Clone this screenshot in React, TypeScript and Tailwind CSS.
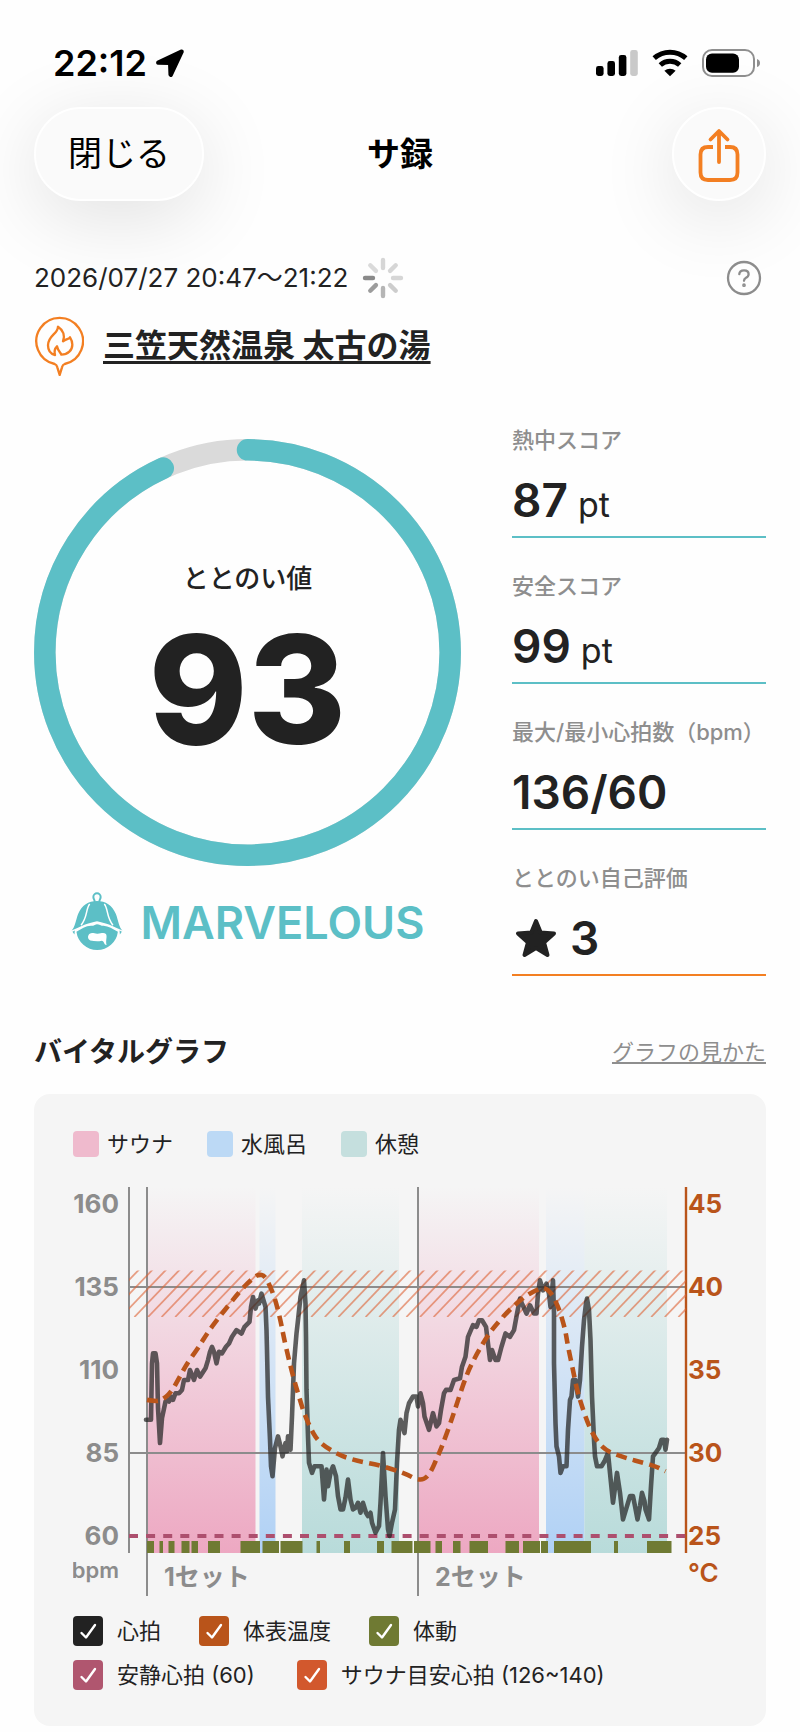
import { useState } from 'react';

type Point = [number, number];

// Chart geometry, in viewBox units
const CHART_W = 654;
const CHART_H = 413;
const AXIS_LEFT = 56;
const AXIS_RIGHT = 613;
const AXIS_BOTTOM = 366;
const START_X = 74;
const SECOND_SET_X = 345;

const bpmY = (bpm: number) => 349 - (bpm - 60) * 3.32;
const tempY = (temp: number) => 349 - (temp - 25) * 16.6;

const heartRate: Point[] = [
  [-1, 95], [4, 95], [5, 112], [6, 115], [8.5, 115], [10, 112], [11, 98.5], [13, 88], [15, 95.5], [18.5, 100.5],
  [20, 101], [22, 100.5], [24, 102], [26, 101], [28.5, 103], [32, 103], [35, 104], [37, 107], [41, 107], [43, 110],
  [47, 107], [50, 110], [53, 108], [58.5, 110.5], [61, 113], [63, 115.5], [65, 117], [67, 115.5], [69.5, 112], [72, 115.5],
  [75, 115], [79, 117], [82, 118], [85, 120], [89.5, 122], [94.5, 121], [97.5, 123], [102.5, 124.5], [104, 129], [106, 132],
  [108.5, 128.5], [111, 131], [112, 130], [114.5, 133], [118.5, 129], [119.5, 122], [120, 116], [121, 102], [123, 89], [124, 81],
  [125.5, 78], [128, 86.5], [131, 90], [133.5, 87], [135.5, 84], [138.5, 88], [140, 85.5], [141, 90], [143.5, 86], [145, 96],
  [147, 112], [149.5, 121], [151, 125], [153.5, 132], [157, 137], [158.5, 130], [159, 120], [159.5, 104], [161, 90], [162, 82],
  [165, 79], [167.5, 81], [174.5, 81], [177, 71], [179.5, 80], [181, 75], [183.5, 79], [186, 81], [189, 78], [191, 72],
  [193.5, 68], [196, 68], [198.5, 71.5], [201, 77], [203.5, 71], [206, 68], [208.5, 68.5], [211, 70], [213.5, 67], [216, 70],
  [219, 67], [221, 66], [223.5, 67], [225, 64], [228.5, 61], [232, 63], [233.5, 70], [236, 85], [238.5, 72], [241, 62],
  [242.5, 60], [245, 64], [248, 68], [250, 82], [252, 92], [253.5, 95], [257.5, 91], [259.5, 97], [262, 100], [266, 102],
  [269.5, 102], [271, 99], [273.5, 103], [276, 100], [277.5, 96], [282, 92], [286, 97], [289.5, 93], [292, 94], [294, 98],
  [297, 103], [299, 104], [303.5, 104], [307, 107], [313, 107.5], [315, 111], [318.5, 114], [321, 120], [326, 123.5], [329.5, 123],
  [332, 125], [335, 125], [339, 123], [341, 118], [343, 113], [345, 116], [348.5, 113], [351, 113], [354.5, 117], [358.5, 121],
  [363, 120], [367, 122], [370, 127], [373, 131.5], [375, 130], [379.5, 127], [383, 129.5], [387, 127], [389.5, 127], [391, 133],
  [393, 137], [396, 134], [399.5, 136], [402, 133], [403.5, 129], [406, 137], [407, 127], [407, 112], [408.5, 94], [409.5, 87],
  [412, 84], [413.5, 79], [416, 81], [419.5, 81], [421, 92], [423, 101], [424.5, 102], [426, 107], [428.5, 107], [431, 102],
  [433, 107], [435, 117], [437, 125], [439, 130], [440, 131.5], [442, 128], [443.5, 119], [445, 102], [447, 89], [448, 84],
  [450, 81], [454.5, 81], [457.5, 82.5], [461, 85], [463, 79], [466, 70], [470, 79], [473, 73], [476, 65], [480, 69],
  [483, 72], [486, 72], [488, 69], [490.5, 65], [493, 69], [495, 73], [497.5, 70.5], [498.5, 68], [502, 65], [504, 75],
  [506, 84], [508.5, 85], [512, 86.5], [514.5, 89], [517, 89], [518.5, 86], [520, 89],
];

const skinTemp: Point[] = [
  [0, 33.2], [8.5, 33.1], [15, 33.2], [23.5, 33.6], [32, 34.5], [40, 35.4], [52, 36.4], [61, 37.3], [75, 38.4], [93.5, 39.8],
  [107, 40.6], [112, 40.75], [117.5, 40.7], [123.5, 40], [128.5, 39.2], [133.5, 38], [137, 36.9], [142, 35.6], [147, 34.4], [152, 33.4],
  [157, 32.4], [163.5, 31.5], [170, 30.8], [180, 30.3], [195, 29.8], [212, 29.5], [230, 29.3], [247, 29], [260, 28.7], [270, 28.4],
  [277, 28.4], [283.5, 28.8], [290, 29.7], [295, 30.4], [303.5, 31.8], [310, 33], [320, 34.8], [330, 36], [341, 37.1], [348.5, 37.7],
  [362, 38.6], [377, 39.4], [388.5, 39.8], [397, 40], [405, 39.6], [412, 38.7], [418, 37.5], [421, 36.4], [426, 35], [430, 33.8],
  [435, 32.8], [442, 31.6], [450, 30.7], [460, 30.1], [478.5, 29.7], [497, 29.4], [508.5, 29.2], [518.5, 28.9],
];

const phases = [
  { from: 1, to: 108.5, fill: 'url(#sauna)' },
  { from: 112.5, to: 128.5, fill: 'url(#water)' },
  { from: 155, to: 252, fill: 'url(#rest)' },
  { from: 272, to: 392, fill: 'url(#sauna)' },
  { from: 399, to: 437.5, fill: 'url(#water)' },
  { from: 437.5, to: 520, fill: 'url(#rest)' },
];

const movement: Point[] = [
  [0, 7], [12.5, 16], [21.5, 27.5], [34.5, 42.5], [44.5, 51], [61, 73], [93.5, 113], [115.5, 132], [133.5, 155.5],
  [169.5, 173], [197, 203], [230, 237], [244.5, 265.5], [267, 283.5], [288.5, 295], [306, 313.5], [322.5, 341],
  [358.5, 372], [376, 393], [394, 401], [407, 444], [467, 471], [500, 524.5],
];

const yTicks = [
  { bpm: 160, temp: 45 },
  { bpm: 135, temp: 40 },
  { bpm: 110, temp: 35 },
  { bpm: 85, temp: 30 },
  { bpm: 60, temp: 25 },
];

// Quadratic smoothing through the midpoints
const smoothPath = (points: Point[]) => {
  const pts = points.map(([x, t]) => [START_X + x, tempY(t)]);
  let d = `M${pts[0][0]} ${pts[0][1]}`;
  for (let i = 1; i < pts.length - 1; i++) {
    const mx = (pts[i][0] + pts[i + 1][0]) / 2;
    const my = (pts[i][1] + pts[i + 1][1]) / 2;
    d += ` Q${pts[i][0]} ${pts[i][1]} ${mx} ${my}`;
  }
  const last = pts[pts.length - 1];
  return `${d} L${last[0]} ${last[1]}`;
};

const StatusBar = () => (
  <div className="flex items-center justify-between pt-[43px] pr-[5px] pl-[19px] text-black">
    <div className="flex items-center gap-2">
      <span className="text-[36px] leading-10 font-semibold">22:12</span>
      <svg width="29" height="29" viewBox="0 0 28 28" aria-hidden="true">
        <path d="M25.5 1.5 L2.5 12.2 Q1.4 13.6 3 14.2 L13.6 14.4 L14 25 Q14.8 26.8 16.2 25.5 L26.8 2.8 Q26.8 1.2 25.5 1.5 Z" fill="currentColor" stroke="currentColor" strokeWidth="2" strokeLinejoin="round" />
      </svg>
    </div>
    <div className="flex items-center gap-3.5">
      <svg width="42" height="28" viewBox="0 0 42 28" aria-hidden="true">
        <rect x="0" y="17" width="7.6" height="10" rx="2.4" />
        <rect x="11.4" y="12" width="7.6" height="15" rx="2.4" />
        <rect x="22.8" y="6" width="7.6" height="21" rx="2.4" />
        <rect x="34.2" y="1" width="7.6" height="26" rx="2.4" fill="#c9c9c9" />
      </svg>
      <svg width="36" height="28" viewBox="0 0 36 28" aria-hidden="true">
        <path d="M2.2 9.2 A23.6 23.6 0 0 1 33.8 9.2" fill="none" stroke="currentColor" strokeWidth="5" />
        <path d="M8.3 16 A14.6 14.6 0 0 1 27.7 16" fill="none" stroke="currentColor" strokeWidth="5" />
        <path d="M18 27.2 L12.4 21.8 A8.4 8.4 0 0 1 23.6 21.8 Z" />
      </svg>
      <svg width="59" height="28" viewBox="0 0 59 28" aria-hidden="true">
        <rect x="1" y="1" width="51" height="26" rx="9" fill="none" stroke="#8f8f8f" strokeWidth="2" />
        <rect x="4" y="4.4" width="33" height="19.4" rx="6" />
        <path d="M55 10 Q58 11 58 14 Q58 17 55 18 Z" fill="#8f8f8f" />
      </svg>
    </div>
  </div>
);

const NavBar = () => (
  <header className="mt-6 flex items-center justify-between text-black">
    <div className="flex-1">
      <button type="button" className="h-[94px] rounded-full border-2 border-white bg-[#fafafa] px-8 text-[34px] leading-10 shadow-[0_16px_80px_rgba(0,0,0,0.12)]">
        閉じる
      </button>
    </div>
    <h1 className="text-[33px] leading-10 font-bold">サ録</h1>
    <div className="flex flex-1 justify-end">
      <button type="button" aria-label="共有" className="grid size-[94px] place-items-center rounded-full border-2 border-white bg-[#fafafa] shadow-[0_16px_80px_rgba(0,0,0,0.12)]">
        <svg width="42" height="56" viewBox="0 -4 42 56" fill="none" stroke="#f37f22" strokeWidth="3.8" strokeLinecap="round" strokeLinejoin="round" aria-hidden="true">
          <path d="M15 17 H10 Q2.5 17 2.5 24.5 V42.5 Q2.5 50 10 50 H32 Q39.5 50 39.5 42.5 V24.5 Q39.5 17 32 17 H27" strokeLinecap="butt" />
          <path d="M21 32 V2 M12.5 9.500 L21 1 L29.500 9.500" />
        </svg>
      </button>
    </div>
  </header>
);

const spokes = ['#d6d6d6', '#d6d6d6', '#d6d6d6', '#cdcdcd', '#b5b5b5', '#9c9c9c', '#8a8a8a', '#dadada'];

const Spinner = () => (
  <svg width="42" height="42" viewBox="-21 -21 42 42" role="status" aria-label="読み込み中">
    {spokes.map((color, i) => (
      <line key={i} x1="0" y1="-10" x2="0" y2="-18" stroke={color} strokeWidth="4.4" strokeLinecap="round" transform={`rotate(${i * 45})`} />
    ))}
  </svg>
);

const PinIcon = () => (
  <svg width="50" height="60" viewBox="-2 -2 150 180" fill="none" stroke="#f37f22" strokeWidth="7" strokeLinejoin="round" className="shrink-0" aria-hidden="true">
    <path d="M60 142 A70 70 0 1 1 90 142 Q84 144 82 152 L75 175 L68 152 Q66 144 60 142 Z" />
    <path d="M70 30 C70 52 40 56 40 86 C40 102 48 112 61 115 C58 104 60 96 67 89 C70 104 78 107 80 114 C100 114 113 100 113 84 C113 74 110 68 106 62 C102 68 94 66 85 74 C92 58 86 40 70 30 Z" />
  </svg>
);

const HatIcon = () => (
  <svg width="52" height="61" viewBox="0 0 156 184" fill="#5cbfc6" className="shrink-0" aria-hidden="true">
    <path d="M71 32 C73 26 67 22 67 15 A11 11 0 0 1 89 15 C89 22 83 26 85 32" fill="none" stroke="#5cbfc6" strokeWidth="6" />
    <path d="M1 116 C12 106 14 84 21 66 C32 40 52 27 78 27 C104 27 124 40 135 66 C142 84 144 106 155 116 C140 110 128 104 114 98 C100 92 92 92 78 88 C64 92 56 92 42 98 C28 104 16 110 1 116 Z" />
    <path d="M56 36 C44 50 50 76 30 100 M100 36 C112 50 106 76 126 100" fill="none" stroke="#fff" strokeWidth="4.5" />
    <path d="M16 120 C30 112 44 102 60 102 C70 102 74 97 78 97 C84 97 90 102 98 102 C112 103 126 112 141 120 A63 63 0 0 1 16 120 Z" />
    <path d="M4 120 L11 116 L10 128 Z M153 120 L146 116 L147 128 Z" />
    <path d="M56 126 C64 121 72 127 80 126 C90 126 98 121 105 127 C110 134 103 148 107 160 C97 158 101 148 92 147 C80 150 68 148 58 146 C48 142 50 130 56 126 Z" fill="#fff" />
  </svg>
);

const ScoreRing = ({ score }: { score: number }) => {
  const length = 2 * Math.PI * 203;
  return (
    <div className="relative">
      <svg viewBox="0 0 427 427" className="w-full -rotate-90" fill="none" strokeWidth="21.5" aria-hidden="true">
        <circle cx="213.5" cy="213.5" r="202.7" stroke="#dadada" />
        <circle cx="213.5" cy="213.5" r="202.7" stroke="#5cbfc6" strokeLinecap="round" strokeDasharray={`${(length * score) / 100} ${length}`} />
      </svg>
      <div className="absolute inset-0 flex flex-col items-center pt-[120px]">
        <span className="text-[26px] leading-10 font-medium">ととのい値</span>
        <span className="mt-4 text-[150px] leading-[150px] font-extrabold">{score}</span>
      </div>
    </div>
  );
};

interface ScoreItemProps {
  label: string;
  lineClass?: string;
  children: React.ReactNode;
}

const ScoreItem = ({ label, lineClass = 'border-[#5cbfc6]', children }: ScoreItemProps) => (
  <div className={`border-b-2 pb-1 ${lineClass}`}>
    <dt className="text-[22px] leading-9 font-medium whitespace-nowrap text-[#8e8e8e]">{label}</dt>
    <dd className="mt-2.5 flex h-16 items-baseline gap-2.5 text-[46px] leading-[64px] font-semibold">{children}</dd>
  </div>
);

const LegendItem = ({ color, label }: { color: string; label: string }) => (
  <li className="flex items-center gap-2">
    <span className={`size-[26px] rounded-[4px] ${color}`}></span>
    <span>{label}</span>
  </li>
);

const VitalChart = ({ visible }: { visible: Record<string, boolean> }) => (
  <svg viewBox={`0 0 ${CHART_W} ${CHART_H}`} className="mt-[30px] w-full" role="img" aria-label="バイタルグラフ">
    <defs>
      <linearGradient id="sauna" x1="0" y1="0" x2="0" y2="1">
        <stop offset="0" stopColor="#eda8c2" stopOpacity="0" />
        <stop offset="1" stopColor="#eda8c2" />
      </linearGradient>
      <linearGradient id="water" x1="0" y1="0" x2="0" y2="1">
        <stop offset="0" stopColor="#b0d1f5" stopOpacity="0" />
        <stop offset="1" stopColor="#b0d1f5" />
      </linearGradient>
      <linearGradient id="rest" x1="0" y1="0" x2="0" y2="1">
        <stop offset="0" stopColor="#b8dbda" stopOpacity="0" />
        <stop offset="1" stopColor="#b8dbda" />
      </linearGradient>
      <clipPath id="target">
        <rect x={AXIS_LEFT} y={bpmY(140)} width={AXIS_RIGHT - AXIS_LEFT} height={bpmY(126) - bpmY(140)} />
      </clipPath>
    </defs>

    {phases.map((p) => (
      <rect key={p.from} x={START_X + p.from} y="0" width={p.to - p.from} height={AXIS_BOTTOM} fill={p.fill} />
    ))}

    {/* Axes and grid */}
    <g stroke="#8c8c8c" strokeWidth="2">
      <line x1={AXIS_LEFT} y1={bpmY(135)} x2={AXIS_RIGHT} y2={bpmY(135)} />
      <line x1={AXIS_LEFT} y1={bpmY(85)} x2={AXIS_RIGHT} y2={bpmY(85)} />
      <line x1={AXIS_LEFT} y1="0" x2={AXIS_LEFT} y2={AXIS_BOTTOM} />
      <line x1={START_X} y1="0" x2={START_X} y2="409" />
      <line x1={SECOND_SET_X} y1="0" x2={SECOND_SET_X} y2="409" />
    </g>
    <line x1={AXIS_RIGHT} y1="0" x2={AXIS_RIGHT} y2={AXIS_BOTTOM} stroke="#b9541a" strokeWidth="2.4" />

    {visible.target && (
      <g clipPath="url(#target)" stroke="#dd6236" strokeOpacity="0.6" strokeWidth="1.8">
        {Array.from({ length: 47 }, (_, i) => (
          <line key={i} x1={7 + i * 13.6} y1="130" x2={53 + i * 13.6} y2="82" />
        ))}
      </g>
    )}

    {visible.resting && (
      <line x1={AXIS_LEFT} y1={bpmY(60)} x2={AXIS_RIGHT} y2={bpmY(60)} stroke="#ad4f6e" strokeWidth="4" strokeDasharray="9 8.1" />
    )}

    {visible.movement &&
      movement.map(([from, to]) => (
        <rect key={from} x={START_X + from} y="354" width={to - from} height="12" fill="#6f7a33" />
      ))}

    {visible.heart && (
      <polyline
        points={heartRate.map(([x, bpm]) => `${START_X + x},${bpmY(bpm)}`).join(' ')}
        fill="none"
        stroke="#222"
        strokeOpacity="0.72"
        strokeWidth="4.6"
        strokeLinecap="round"
        strokeLinejoin="round"
      />
    )}

    {visible.temp && (
      <path d={smoothPath(skinTemp)} fill="none" stroke="#b9541a" strokeWidth="4.6" strokeDasharray="10.8 6.3" />
    )}

    {yTicks.map((tick) => (
      <g key={tick.bpm} className="text-[26px] font-bold">
        <text x="46" y={bpmY(tick.bpm) + 9} textAnchor="end" fill="#8c8c8c">{tick.bpm}</text>
        <text x="615" y={bpmY(tick.bpm) + 9} fill="#b9541a">{tick.temp}</text>
      </g>
    ))}
    <text x="46" y="391" textAnchor="end" fill="#8c8c8c" className="text-[22px] font-semibold">bpm</text>
    <text x="615" y="395" fill="#b9541a" className="text-[26px] font-semibold">°C</text>
    <text x="91" y="399" fill="#8c8c8c" className="text-[25px] font-bold">1セット</text>
    <text x="362" y="399" fill="#8c8c8c" className="text-[25px] font-bold">2セット</text>
  </svg>
);

interface SeriesToggleProps {
  label: string;
  color: string;
  checked: boolean;
  onChange: () => void;
}

const SeriesToggle = ({ label, color, checked, onChange }: SeriesToggleProps) => (
  <label className="flex items-center gap-3.5">
    <span className="relative flex">
      <input type="checkbox" checked={checked} onChange={onChange} className={`size-[30px] appearance-none rounded-[4px] ${color}`} />
      {checked && (
        <svg viewBox="0 0 30 30" className="pointer-events-none absolute inset-0" fill="none" stroke="#fff" strokeWidth="2.4" strokeLinecap="round" strokeLinejoin="round" aria-hidden="true">
          <path d="M8.5 17 L13 21.5 L22 9" />
        </svg>
      )}
    </span>
    <span>{label}</span>
  </label>
);

export default function App() {
  const [visible, setVisible] = useState<Record<string, boolean>>({
    heart: true,
    temp: true,
    movement: true,
    resting: true,
    target: true,
  });

  const toggle = (key: string) => setVisible((v) => ({ ...v, [key]: !v[key] }));

  return (
    <div lang="ja" className="min-h-screen overflow-hidden bg-[#fefefe] px-[34px] pb-1.5 font-['Inter','Noto_Sans_CJK_JP',sans-serif] text-[#222]">
      <StatusBar />
      <NavBar />

      <main>
        <div className="mt-14 flex items-center justify-between">
          <div className="flex items-center gap-3.5">
            <time className="text-[26px] leading-10">2026/07/27 20:47～21:22</time>
            <Spinner />
          </div>
          <button type="button" aria-label="ヘルプ" className="mr-1">
            <svg width="36" height="36" viewBox="0 0 36 36" fill="none" stroke="#8c8c8c" strokeWidth="2.3" strokeLinecap="round" aria-hidden="true">
              <circle cx="18" cy="18" r="16" />
              <path d="M13.3 14.2 Q13.6 10.4 18 10.4 Q22.6 10.4 22.6 14.2 Q22.6 16.4 20 17.8 Q18 18.9 18 20.8" />
              <circle cx="18" cy="25.2" r="0.7" fill="#8c8c8c" />
            </svg>
          </button>
        </div>

        <div className="mt-[17px] flex items-center gap-[19px]">
          <PinIcon />
          <a href="#venue" className="text-[32px] leading-10 font-bold underline decoration-3 underline-offset-4">三笠天然温泉 太古の湯</a>
        </div>

        <section className="mt-[42px] grid grid-cols-[427fr_254fr] gap-[51px]">
          <div className="pt-[21px]">
            <ScoreRing score={93} />
            <div className="mt-[26px] flex items-center justify-center gap-[18px]">
              <HatIcon />
              <span className="text-[45px] leading-[60px] font-semibold text-[#5cbfc6]">MARVELOUS</span>
            </div>
          </div>
          <dl className="flex flex-col gap-[30px] pt-1">
            <ScoreItem label="熱中スコア">
              87<span className="text-[34px] font-normal">pt</span>
            </ScoreItem>
            <ScoreItem label="安全スコア">
              99<span className="text-[34px] font-normal">pt</span>
            </ScoreItem>
            <ScoreItem label="最大/最小心拍数（bpm）">136/60</ScoreItem>
            <ScoreItem label="ととのい自己評価" lineClass="border-[#f37f22]">
              <svg width="48" height="40" viewBox="-24 -20 48 40" className="self-center" aria-hidden="true">
                <path d="M0 -17 L4.7 -5.4 L18 -4.6 L8 4.4 L11.5 17 L0 10 L-11.5 17 L-8 4.4 L-18 -4.6 L-4.7 -5.4 Z" fill="#222" stroke="#222" strokeWidth="4" strokeLinejoin="round" />
              </svg>
              3
            </ScoreItem>
          </dl>
        </section>

        <section className="mt-14">
          <div className="flex items-center justify-between">
            <h2 className="text-[28px] leading-10 font-bold">バイタルグラフ</h2>
            <a href="#guide" className="text-[22px] leading-10 text-[#8e8e8e] underline decoration-2 underline-offset-2">グラフの見かた</a>
          </div>

          <div className="mt-[22px] rounded-2xl bg-[#f5f5f5] px-[39px] pt-[37px] pb-9 text-[22px] leading-[26px]">
            <ul className="flex gap-[34px]">
              <LegendItem color="bg-[#efbacd]" label="サウナ" />
              <LegendItem color="bg-[#bcd9f5]" label="水風呂" />
              <LegendItem color="bg-[#c5dfde]" label="休憩" />
            </ul>

            <VitalChart visible={visible} />

            <div className="mt-4 flex flex-col gap-3.5 leading-[30px]">
              <div className="flex gap-[38px]">
                <SeriesToggle label="心拍" color="bg-[#222222]" checked={visible.heart} onChange={() => toggle('heart')} />
                <SeriesToggle label="体表温度" color="bg-[#b9541a]" checked={visible.temp} onChange={() => toggle('temp')} />
                <SeriesToggle label="体動" color="bg-[#6f7a33]" checked={visible.movement} onChange={() => toggle('movement')} />
              </div>
              <div className="flex gap-[42px]">
                <SeriesToggle label="安静心拍 (60)" color="bg-[#b0566f]" checked={visible.resting} onChange={() => toggle('resting')} />
                <SeriesToggle label="サウナ目安心拍 (126~140)" color="bg-[#d2582d]" checked={visible.target} onChange={() => toggle('target')} />
              </div>
            </div>
          </div>
        </section>
      </main>
    </div>
  );
}
